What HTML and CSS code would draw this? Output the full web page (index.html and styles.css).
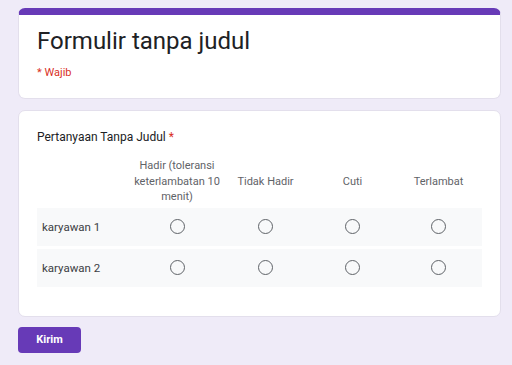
FILE: index.html
```html
<!DOCTYPE html>
<html lang="id">
<head>
<meta charset="utf-8">
<title>Formulir tanpa judul</title>
<link rel="stylesheet" href="styles.css">
</head>
<body>
<div class="page">
  <div class="card card-head">
    <h1 class="title">Formulir tanpa judul</h1>
    <div class="required">* Wajib</div>
  </div>
  <div class="card card-question">
    <div class="question">Pertanyaan Tanpa Judul <span class="star">*</span></div>
    <div class="grid">
      <div class="head-row">
        <div class="cell label"></div>
        <div class="cell col">Hadir (toleransi keterlambatan 10 menit)</div>
        <div class="cell col">Tidak Hadir</div>
        <div class="cell col">Cuti</div>
        <div class="cell col">Terlambat</div>
      </div>
      <div class="row">
        <div class="cell label">karyawan 1</div>
        <div class="cell"><span class="radio"></span></div>
        <div class="cell"><span class="radio"></span></div>
        <div class="cell"><span class="radio"></span></div>
        <div class="cell"><span class="radio"></span></div>
      </div>
      <div class="row">
        <div class="cell label">karyawan 2</div>
        <div class="cell"><span class="radio"></span></div>
        <div class="cell"><span class="radio"></span></div>
        <div class="cell"><span class="radio"></span></div>
        <div class="cell"><span class="radio"></span></div>
      </div>
    </div>
  </div>
  <button class="submit" type="button">Kirim</button>
</div>
</body>
</html>
```
FILE: styles.css
```css
html, body {
  margin: 0;
  padding: 0;
  background: #efebf8;
  font-family: Roboto, "Liberation Sans", Arial, sans-serif;
  color: #202124;
}
.page {
  padding: 8px 11px 0 18px;
  display: flex;
  flex-direction: column;
  align-items: flex-start;
}
.card {
  box-sizing: border-box;
  width: 483px;
  background: #fff;
  border-radius: 7px;
  border: 1px solid #e3dfec;
}
.card-head {
  border-top: 7px solid #673ab7;
  padding: 10px 18px 17px 18px;
}
.title {
  margin: 0;
  font-weight: 400;
  font-size: 24px;
  line-height: 32px;
  color: #202124;
}
.required {
  margin-top: 8px;
  font-size: 11px;
  line-height: 16px;
  color: #d93025;
}
.card-question {
  margin-top: 11px;
  padding: 18px 18px 29px 18px;
}
.question {
  font-size: 12px;
  line-height: 16px;
  color: #202124;
}
.star { color: #d93025; }
.grid {
  margin-top: 13px;
  display: flex;
  flex-direction: column;
  gap: 3px;
}
.head-row, .row {
  display: grid;
  grid-template-columns: 96px 88px 89px 85px 1fr;
  align-items: center;
}
.row {
  height: 38px;
  background: #f8f9fa;
}
.cell {
  display: flex;
  justify-content: center;
  align-items: center;
}
.col {
  font-size: 11px;
  line-height: 15.5px;
  color: #5f6368;
  text-align: center;
  padding: 0;
}
.label {
  justify-content: flex-start;
  padding-left: 5px;
  font-size: 11.5px;
  color: #3c4043;
}
.radio {
  box-sizing: border-box;
  width: 15px;
  height: 15px;
  border: 1.5px solid #5f6368;
  border-radius: 50%;
  display: block;
}
.submit {
  margin-top: 10px;
  width: 63px;
  height: 26px;
  border: none;
  border-radius: 4px;
  background: #673ab7;
  color: #fff;
  font-family: Roboto, "Liberation Sans", Arial, sans-serif;
  font-weight: 700;
  font-size: 11px;
  padding: 0;
}
```
